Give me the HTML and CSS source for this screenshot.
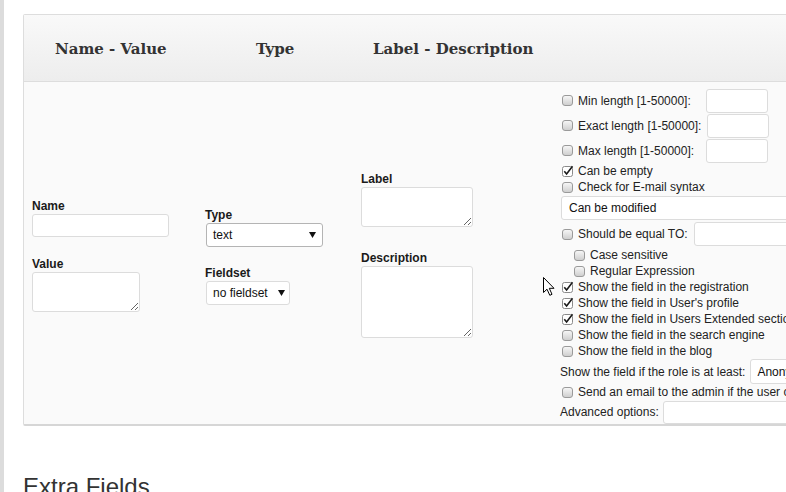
FILE: index.html
```html
<!DOCTYPE html>
<html>
<head>
<meta charset="utf-8">
<link rel="stylesheet" href="styles.css">
</head>
<body>
<div class="page">
  <div class="card">
    <div class="head">
      <div class="th th-1">Name - Value</div>
      <div class="th th-2">Type</div>
      <div class="th th-3">Label - Description</div>
      <div class="th"></div>
    </div>
    <div class="rows">
      <div class="cell c1">
        <label class="lbl">Name</label>
        <input class="txt name" type="text">
        <label class="lbl lbl-value">Value</label>
        <textarea class="ta value"></textarea>
      </div>
      <div class="cell c2">
        <label class="lbl">Type</label>
        <span class="sel sel-type"><span class="sel-text">text</span><svg class="arrow" width="7" height="6" viewBox="0 0 7 6"><polygon points="0,0 7,0 3.5,6" fill="#111"/></svg></span>
        <label class="lbl lbl-fieldset">Fieldset</label>
        <span class="sel sel-fieldset"><span class="sel-text">no fieldset</span><svg class="arrow" width="7" height="6" viewBox="0 0 7 6"><polygon points="0,0 7,0 3.5,6" fill="#111"/></svg></span>
      </div>
      <div class="cell c3">
        <label class="lbl">Label</label>
        <textarea class="ta label"></textarea>
        <label class="lbl lbl-desc">Description</label>
        <textarea class="ta desc"></textarea>
      </div>
      <div class="cell c4">
        <div class="opt inrow"><span class="cb"></span><span class="otext w">Min length [1-50000]:</span><input class="txt small" type="text"></div>
        <div class="opt inrow"><span class="cb"></span><span class="otext w">Exact length [1-50000]:</span><input class="txt small exact" type="text"></div>
        <div class="opt inrow"><span class="cb"></span><span class="otext w">Max length [1-50000]:</span><input class="txt small" type="text"></div>
        <div class="opt"><span class="cb on"><svg width="12" height="12" viewBox="0 0 12 12"><rect x="0.5" y="1.5" width="10" height="10" rx="2" fill="#fff" stroke="#8a8a8a"/><path d="M2.3 6.3 L4.6 9 L10.5 1.2" fill="none" stroke="#1a1a1a" stroke-width="1.6"/></svg></span><span class="otext">Can be empty</span></div>
        <div class="opt"><span class="cb"></span><span class="otext">Check for E-mail syntax</span></div>
        <div class="selrow"><span class="sel sel-wide"><span class="sel-text">Can be modified</span></span></div>
        <div class="opt eqrow"><span class="cb"></span><span class="otext">Should be equal TO:</span><input class="txt equal" type="text"></div>
        <div class="opt sub"><span class="cb"></span><span class="otext">Case sensitive</span></div>
        <div class="opt sub"><span class="cb"></span><span class="otext">Regular Expression</span></div>
        <div class="opt"><span class="cb on"><svg width="12" height="12" viewBox="0 0 12 12"><rect x="0.5" y="1.5" width="10" height="10" rx="2" fill="#fff" stroke="#8a8a8a"/><path d="M2.3 6.3 L4.6 9 L10.5 1.2" fill="none" stroke="#1a1a1a" stroke-width="1.6"/></svg></span><span class="otext">Show the field in the registration</span></div>
        <div class="opt"><span class="cb on"><svg width="12" height="12" viewBox="0 0 12 12"><rect x="0.5" y="1.5" width="10" height="10" rx="2" fill="#fff" stroke="#8a8a8a"/><path d="M2.3 6.3 L4.6 9 L10.5 1.2" fill="none" stroke="#1a1a1a" stroke-width="1.6"/></svg></span><span class="otext">Show the field in User's profile</span></div>
        <div class="opt"><span class="cb on"><svg width="12" height="12" viewBox="0 0 12 12"><rect x="0.5" y="1.5" width="10" height="10" rx="2" fill="#fff" stroke="#8a8a8a"/><path d="M2.3 6.3 L4.6 9 L10.5 1.2" fill="none" stroke="#1a1a1a" stroke-width="1.6"/></svg></span><span class="otext">Show the field in Users Extended section</span></div>
        <div class="opt"><span class="cb"></span><span class="otext">Show the field in the search engine</span></div>
        <div class="opt"><span class="cb"></span><span class="otext">Show the field in the blog</span></div>
        <div class="opt rolerow"><span class="otext">Show the field if the role is at least:</span><span class="sel sel-role"><span class="sel-text">Anonymous</span></span></div>
        <div class="opt"><span class="cb"></span><span class="otext">Send an email to the admin if the user changes this field</span></div>
        <div class="opt advrow"><span class="otext">Advanced options:</span><input class="txt adv" type="text"></div>
      </div>
    </div>
  </div>
  <h2 class="extra">Extra Fields</h2>
</div>
<svg class="cursor" width="14" height="21" viewBox="0 0 14 21"><path d="M1.5 1.5 L1.5 16.5 L5 13.2 L7.8 19.3 L10 18.3 L7.3 12.3 L12 12.3 Z" fill="#fff" stroke="#000" stroke-width="1" stroke-linejoin="round"/></svg>
</body>
</html>
```

FILE: styles.css
```css
html, body {
  margin: 0;
  padding: 0;
  overflow: hidden;
  background: #fff;
}

body {
  font-family: "Liberation Sans", Arial, sans-serif;
  color: #222;
  width: 786px;
  height: 492px;
}

.page {
  border-left: 4px solid #dcdcdc;
  padding: 14px 0 0 19px;
  height: 478px;
}

.card {
  width: 880px;
  border: 1px solid #dddddd;
  border-bottom: 2px solid #d6d6d6;
  border-radius: 2px 0 0 2px;
  background: #fafafa;
}

.head {
  display: grid;
  grid-template-columns: 181px 156px 199px 1fr;
  height: 65px;
  padding-top: 1px;
  align-items: center;
  background: linear-gradient(#f9f9f9, #ededed);
  border-bottom: 1px solid #dddddd;
}

.th {
  font-family: "DejaVu Serif", Georgia, serif;
  font-weight: bold;
  font-size: 15px;
  color: #333;
  white-space: nowrap;
}

.th-1 { padding-left: 31px; }
.th-2 { padding-left: 51px; }
.th-3 { padding-left: 12px; }

.rows {
  display: grid;
  grid-template-columns: 181px 156px 199px 1fr;
}

.cell {
  display: flex;
  flex-direction: column;
  justify-content: center;
  align-items: flex-start;
}

.c1 { padding-left: 8px; padding-top: 4px; }
.c2 { padding-top: 7px; }
.c3 { padding-top: 4px; }

.lbl {
  display: block;
  font-size: 12px;
  line-height: 14px;
  font-weight: bold;
  color: #1a1a1a;
  margin-bottom: 1px;
}

.lbl-value { margin-top: 20px; }
.lbl-fieldset { margin-top: 19px; }
.lbl-desc { margin-top: 24px; }

.txt, .ta {
  box-sizing: border-box;
  border: 1px solid #dcdcdc;
  border-radius: 3px;
  background: #fff;
  margin: 0;
  padding: 2px 4px;
  font-family: "Liberation Sans", Arial, sans-serif;
  font-size: 12px;
  outline: none;
}

.txt.name { width: 137px; height: 23px; }
.ta.value { width: 108px; height: 40px; }
.ta.label { width: 112px; height: 40px; }
.ta.desc { width: 112px; height: 72px; }

.sel {
  box-sizing: border-box;
  display: inline-flex;
  align-items: center;
  background: #fff;
  border: 1px solid #dcdcdc;
  border-radius: 3px;
  font-size: 12px;
  color: #111;
  white-space: nowrap;
  padding-left: 6px;
}

.sel-text { flex: none; }

.sel-type {
  width: 117px;
  height: 24px;
  border-color: #b4b4b4;
  justify-content: space-between;
  padding-right: 6px;
  margin-left: 1px;
}

.sel-fieldset {
  width: 84px;
  height: 24px;
  margin-left: 1px;
  gap: 10px;
}

.arrow { flex: none; }

.c4 {
  justify-content: flex-start;
  padding-top: 6px;
  font-size: 12px;
  color: #222;
  white-space: nowrap;
}

.opt {
  display: flex;
  align-items: center;
  height: 16px;
}

.inrow { height: 25px; }

.cb {
  flex: none;
  box-sizing: border-box;
  width: 11px;
  height: 11px;
  margin-left: 2px;
  margin-right: 5px;
  border: 1px solid #9a9a9a;
  border-radius: 3px;
  background: linear-gradient(#f6f6f6, #cfcfcf);
  position: relative;
}

.cb.on {
  border: none;
  background: none;
}

.cb.on svg {
  position: absolute;
  left: 0;
  top: -1px;
}

.sub .cb { margin-left: 14px; }

.otext { flex: none; }
.otext.w { width: 128px; }

.txt.small { width: 62px; height: 24px; }
.txt.small.exact { margin-left: 1px; }

.selrow {
  display: flex;
  height: 26px;
  padding-top: 1px;
  box-sizing: border-box;
}

.sel-wide {
  width: 260px;
  height: 24px;
  margin-left: 1px;
  padding-left: 7px;
}

.eqrow { height: 26px; }
.txt.equal { width: 150px; height: 24px; margin-left: 6px; }

.rolerow { height: 25px; }
.sel-role {
  margin-left: 5px;
  width: 120px;
  height: 25px;
  padding-left: 6px;
}

.advrow { height: 24px; }
.txt.adv { width: 200px; height: 23px; margin-left: 4px; }

.extra {
  margin: 47px 0 0 0;
  font-family: "Liberation Sans", Arial, sans-serif;
  font-weight: normal;
  font-size: 24px;
  color: #333;
}

.cursor {
  position: absolute;
  left: 542px;
  top: 276px;
}
```
